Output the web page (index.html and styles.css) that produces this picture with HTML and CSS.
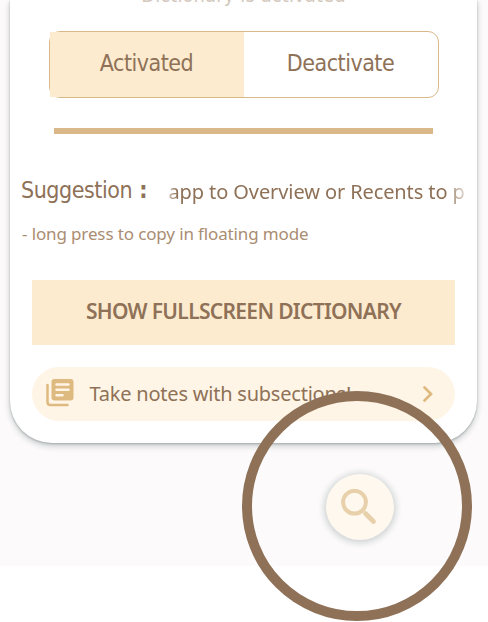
FILE: index.html
```html
<!DOCTYPE html>
<html lang="en">
<head>
<meta charset="utf-8">
<title>Dictionary</title>
<link rel="stylesheet" href="styles.css">
</head>
<body>
<main class="screen">
  <section class="card">
    <div class="status"><span>Dictionary is activated</span></div>
    <div class="toggle">
      <div class="option selected"><span>Activated</span></div>
      <div class="option"><span>Deactivate</span></div>
    </div>
    <hr class="divider">
    <div class="suggestion">
      <span class="label">Suggestion <b>:</b></span>
      <div class="marquee"><span>app to Overview or Recents to p</span></div>
    </div>
    <p class="hint"><span>- long press to copy in floating mode</span></p>
    <div class="fullscreen"><span>SHOW FULLSCREEN DICTIONARY</span></div>
    <div class="notes">
      <svg class="library" viewBox="0 0 28 28" width="28" height="28"><path d="M1.500 6v17q0 3 3 3h17" fill="none" stroke="#deb980" stroke-width="2.5" stroke-linecap="round"/><rect x="5.500" y="0" width="22" height="21.5" rx="3" fill="#deb980"/><path d="M10.500 5.4h12M10.500 10.8h12M10.500 16.2h6" stroke="#fff5e6" stroke-width="2.5" stroke-linecap="round"/></svg>
      <span class="notes-text">Take notes with subsections!</span>
      <svg class="chevron" viewBox="0 0 10 16" width="10" height="16"><path d="M1.5 1.5 8 8l-6.500 6.500" fill="none" stroke="#deb980" stroke-width="2.7" stroke-linecap="round"/></svg>
    </div>
  </section>
</main>
<div class="ring">
  <div class="search">
    <svg viewBox="0 0 36 36" width="36" height="36"><g fill="none" stroke="#e8d0aa"><circle cx="13.500" cy="13.200" r="11.400" stroke-width="4"/><path d="m24.500 24.500 8 8" stroke-width="4.700" stroke-linecap="round"/></g></svg>
  </div>
</div>
</body>
</html>
```
FILE: styles.css
```css
* { box-sizing: border-box; }
body { margin: 0; height: 622px; overflow: hidden; position: relative; background: #fff; color: #8e7157; font-family: "Noto Sans", sans-serif; }
span { white-space: nowrap; }
.screen { height: 566px; padding: 0 11px 0 10px; background: #fcfafb; overflow: hidden; }
.card { height: 443px; background: #fff; border-radius: 0 0 42px 42px; box-shadow: 0 1px 2px #a9adad, 0 3px 6px #c4caca; overflow: hidden; display: flex; flex-direction: column; }
.status { height: 31px; flex: none; display: flex; justify-content: center; font: 20px/24px "DejaVu Sans Condensed", sans-serif; color: #d3c8bd; }
.status span { margin-top: -17px; letter-spacing: 0.1px; }
.toggle { width: 390px; height: 67px; flex: none; margin-left: 38.500px; display: flex; border: 1.3px solid #d9b98a; border-radius: 11px; background: #fff; }
.option { flex: 1; display: flex; align-items: center; justify-content: center; font: 23px/30px "DejaVu Sans Condensed", "DejaVu Sans", sans-serif; letter-spacing: -0.5px; }
.option span { margin-top: -3px; }
.selected { background: #fdebcf; }
.divider { width: 379px; height: 5.500px; flex: none; margin: 30px 0 0 44px; border: 0; background: #dab889; }
.suggestion { display: flex; height: 40px; margin: 36px 0 0 11px; flex: none; }
.label { width: 141px; font: 23px/40px "DejaVu Sans Condensed", "DejaVu Sans", sans-serif; letter-spacing: -0.45px; }
.label b { margin-left: 1px; }
.marquee { width: 303px; padding-left: 6.500px; overflow: hidden; font-size: 20px; line-height: 44px; letter-spacing: -0.1px; -webkit-mask-image: linear-gradient(90deg, transparent, #000 5%, #000 94%, transparent 102%); mask-image: linear-gradient(90deg, transparent, #000 5%, #000 94%, transparent 102%); }
.hint { margin: 11px 0 0 12px; font-size: 17px; line-height: 26px; letter-spacing: -0.13px; color: #aa8d72; }
.fullscreen { width: 423px; height: 65px; flex: none; margin: 33px 0 0 22px; background: #fdebcf; display: flex; align-items: center; justify-content: center; font-weight: 600; font-size: 21px; letter-spacing: -0.68px; }
.fullscreen span { margin-top: -2px; }
.notes { width: 423px; height: 54px; flex: none; margin: 22px 0 0 22px; padding: 0 22px 0 14px; background: #fff5e6; border-radius: 27px; display: flex; align-items: center; }
.library { margin-top: -1px; }
.notes-text { flex: 1; margin-left: 15.500px; font-size: 20px; letter-spacing: -0.22px; }
.ring { position: absolute; left: 242px; top: 391px; width: 230px; height: 230px; border: 10px solid #8e7157; border-radius: 50%; }
.search { width: 68px; height: 66px; margin: 73px 0 0 74px; border-radius: 50%; background: #fff8ef; box-shadow: 0 1px 6px 2px #cdd2d2; padding: 15px 0 0 15px; }
.search svg { display: block; }
```
